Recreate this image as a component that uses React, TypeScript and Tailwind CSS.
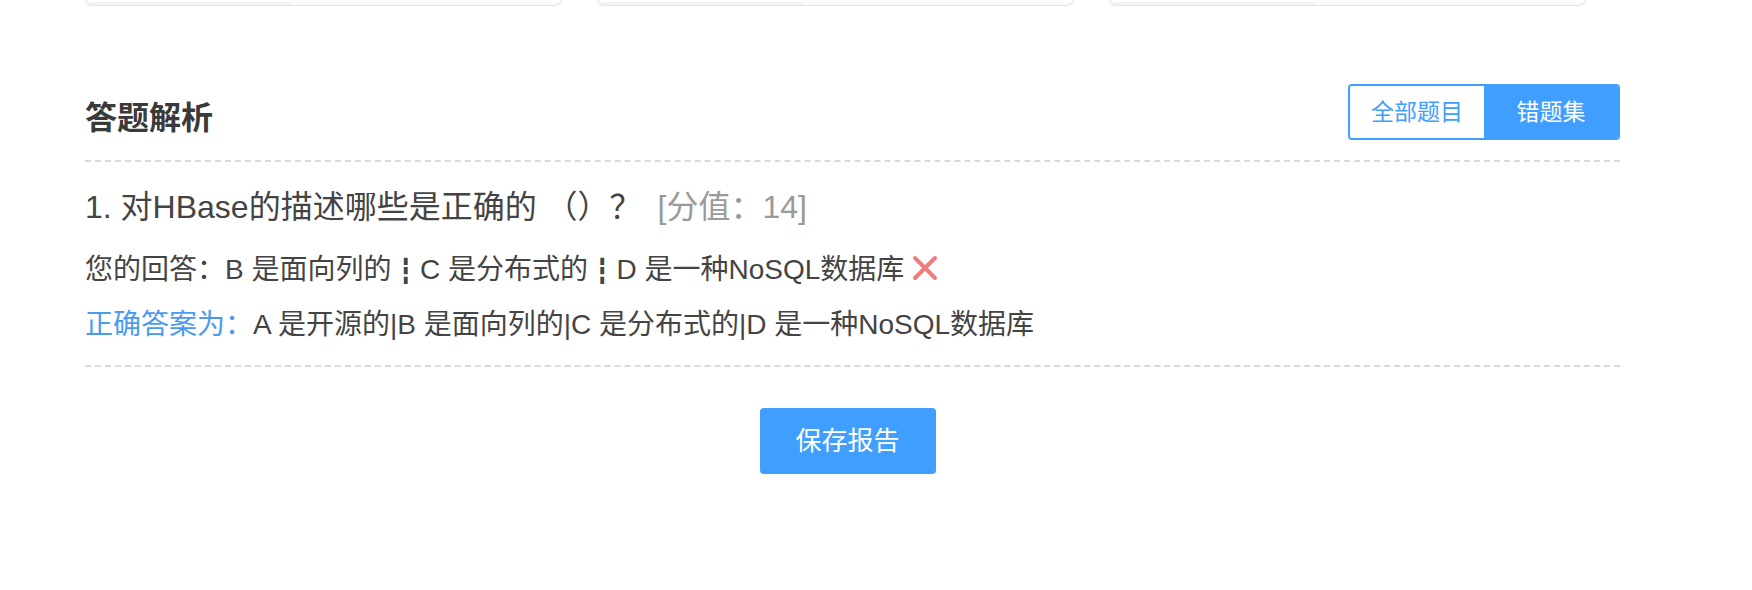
import React from 'react';

const ReportCard: React.FC = () => (
  <div className="w-[477px] h-[40px] shrink-0 rounded-[8px] border border-[#e4e4e4] bg-white shadow-[0_1px_2px_rgba(0,0,0,0.08)] flex flex-col justify-end overflow-hidden">
    <div className="flex h-[3px]">
      <div className="w-[205px] bg-[#f3f3f3]" />
      <div className="flex-1 bg-[#fbfbfb]" />
    </div>
  </div>
);

const Sep: React.FC = () => (
  <span className="inline-block mx-[7px] font-['DejaVu_Sans_Mono',monospace] text-[24px] leading-none text-[#444]">┇</span>
);

const WrongMark: React.FC = () => (
  <svg
    className="inline-block ml-[6px] align-[-4px]"
    width="30"
    height="30"
    viewBox="0 0 30 30"
    aria-label="错误"
  >
    <path d="M5 5 L25 25 M25 5 L5 25" stroke="#ee6b6b" strokeWidth="4" strokeLinecap="round" opacity="0.88" />
  </svg>
);

interface Question {
  index: number;
  title: string;
  score: number;
  yourAnswer: string[];
  correctAnswer: string[];
}

const question: Question = {
  index: 1,
  title: '对HBase的描述哪些是正确的 （）？',
  score: 14,
  yourAnswer: ['B 是面向列的', 'C 是分布式的', 'D 是一种NoSQL数据库'],
  correctAnswer: ['A 是开源的', 'B 是面向列的', 'C 是分布式的', 'D 是一种NoSQL数据库']
};

export default function App() {
  return (
    <div className="min-h-screen bg-white font-['Liberation_Sans','Noto_Sans_CJK_SC',sans-serif] text-[#444]">
      <div className="w-[1535px] ml-[85px]">
        {/* report cards, scrolled mostly out of view */}
        <div className="flex items-end gap-[35px] h-[6px] overflow-hidden">
          <ReportCard />
          <ReportCard />
          <ReportCard />
        </div>

        <section className="mt-[78px]">
          <div className="flex items-start justify-between pb-[14px] border-b-2 border-dashed border-[#dadada]">
            <h2 className="pt-[6px] text-[32px] leading-[56px] font-bold text-[#3a3a3a]">答题解析</h2>
            <div className="flex border-2 border-[#409eff] rounded-[4px] overflow-hidden">
              <button className="w-[134px] h-[52px] bg-white text-[23px] text-[#409eff]">全部题目</button>
              <button className="w-[134px] h-[52px] bg-[#409eff] text-[23px] text-white">错题集</button>
            </div>
          </div>

          <div className="pt-[25px] pb-[20px] border-b-2 border-dashed border-[#dadada]">
            <p className="text-[32px] leading-[40px]">
              {question.index}. {question.title}
              <span className="ml-[16px] text-[#9a9a9a]">[分值：{question.score}]</span>
            </p>
            <p className="mt-[23px] text-[28px] leading-[40px]">
              您的回答：
              {question.yourAnswer.map((a, i) => (
                <React.Fragment key={a}>
                  {i > 0 && <Sep />}
                  {a}
                </React.Fragment>
              ))}
              <WrongMark />
            </p>
            <p className="mt-[15px] text-[28px] leading-[40px]">
              <span className="text-[#4a9af0]">正确答案为：</span>
              {question.correctAnswer.join('|')}
            </p>
          </div>

          <div className="flex justify-center pt-[41px] pr-[10px]">
            <button className="w-[176px] h-[66px] rounded-[4px] bg-[#409eff] text-[26px] text-white">保存报告</button>
          </div>
        </section>
      </div>
    </div>
  );
}
